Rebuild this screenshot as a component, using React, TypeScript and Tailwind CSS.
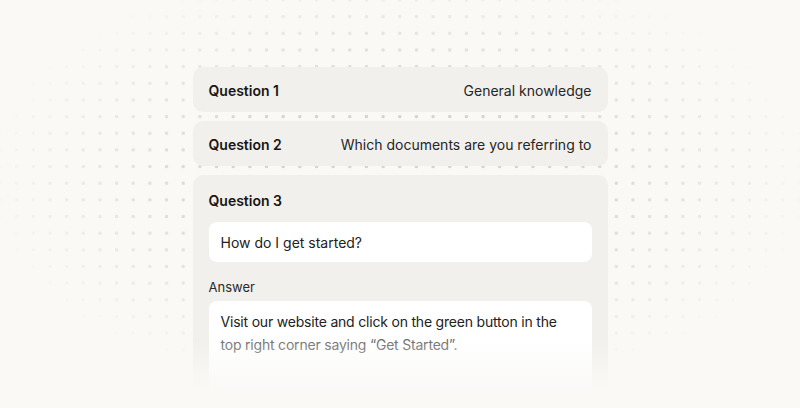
import React from "react";

export default function App() {
  return (
    <div className="relative w-[800px] h-[408px] overflow-hidden bg-[#faf9f6] font-['Inter',sans-serif] text-[#1c1c1c]">
      <div className="absolute inset-0 bg-[radial-gradient(circle,#d6d4ce_1.7px,transparent_2px)] bg-[size:16.667px_16.667px] bg-[position:-8.333px_-8.333px] [mask-image:radial-gradient(ellipse_420px_220px_at_50%_44%,black_40%,transparent_100%)]" />
      <div className="relative mx-auto w-[415px] pt-[67px] flex flex-col gap-[9px]">
        <div className="h-[45px] rounded-[10px] bg-[#f1f0ed] px-4 pt-[1px] flex items-center justify-between text-[14px]">
          <span className="font-semibold text-[#161616]">Question 1</span>
          <span className="text-[#262626]">General knowledge</span>
        </div>
        <div className="h-[45px] rounded-[10px] bg-[#f1f0ed] px-4 pt-[1px] flex items-center justify-between text-[14px]">
          <span className="font-semibold text-[#161616]">Question 2</span>
          <span className="text-[#262626]">Which documents are you referring to</span>
        </div>
        <div className="rounded-[10px] bg-[#f1f0ed] px-4 pt-[16px] pb-10 flex flex-col">
          <span className="font-semibold text-[14px] leading-5 text-[#161616]">Question 3</span>
          <div className="mt-[11px] h-[40px] rounded-[8px] bg-white px-3 flex items-center text-[14px] text-[#222]">
            How do I get started?
          </div>
          <span className="mt-[17px] text-[13px] leading-4 text-[#2a2a2a]">Answer</span>
          <div className="mt-[6px] h-[110px] rounded-[8px] bg-white px-3 pt-[9px] text-[14px] leading-[23px] tracking-[-0.2px]">
            <p className="text-[#222]">Visit our website and click on the green button in the</p>
            <p className="text-[#6e6e6e]">top right corner saying “Get Started”.</p>
          </div>
        </div>
      </div>
      <div className="absolute left-0 right-0 top-[340px] bottom-0 bg-linear-to-b from-[#faf9f6]/0 via-[#faf9f6]/85 via-60% to-[#faf9f6] to-80%" />
    </div>
  );
}
